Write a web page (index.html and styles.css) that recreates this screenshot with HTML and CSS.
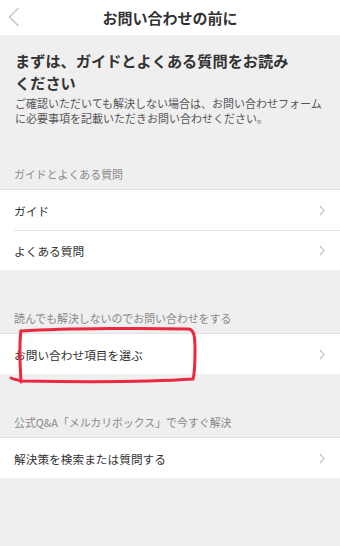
FILE: index.html
```html
<!DOCTYPE html>
<html lang="ja">
<head>
<meta charset="utf-8">
<link rel="stylesheet" href="styles.css">
</head>
<body>
<div class="page">
  <header class="header">
    <svg class="back" width="12" height="20" viewBox="0 0 12 20"><path d="M10.5 1 L1.5 10 L10.5 19" fill="none" stroke="#c9c9c9" stroke-width="1.6"/></svg>
    <h1 class="title">お問い合わせの前に</h1>
  </header>
  <section class="intro">
    <h2 class="intro-head">まずは、ガイドとよくある質問をお読みください</h2>
    <p class="intro-text">ご確認いただいても解決しない場合は、お問い合わせフォームに必要事項を記載いただきお問い合わせください。</p>
  </section>

  <div class="label">ガイドとよくある質問</div>
  <ul class="list">
    <li class="row"><span>ガイド</span><svg class="chev" width="6" height="11" viewBox="0 0 6 11"><path d="M1 1 L5 5.5 L1 10" fill="none" stroke="#c6c6c6" stroke-width="1.3"/></svg></li>
    <li class="row"><span>よくある質問</span><svg class="chev" width="6" height="11" viewBox="0 0 6 11"><path d="M1 1 L5 5.5 L1 10" fill="none" stroke="#c6c6c6" stroke-width="1.3"/></svg></li>
  </ul>

  <div class="label">読んでも解決しないのでお問い合わせをする</div>
  <ul class="list">
    <li class="row"><span>お問い合わせ項目を選ぶ</span><svg class="chev" width="6" height="11" viewBox="0 0 6 11"><path d="M1 1 L5 5.5 L1 10" fill="none" stroke="#c6c6c6" stroke-width="1.3"/></svg></li>
  </ul>

  <div class="label">公式Q&amp;A「メルカリボックス」で今すぐ解決</div>
  <ul class="list">
    <li class="row"><span>解決策を検索または質問する</span><svg class="chev" width="6" height="11" viewBox="0 0 6 11"><path d="M1 1 L5 5.5 L1 10" fill="none" stroke="#c6c6c6" stroke-width="1.3"/></svg></li>
  </ul>

  <svg class="mark" width="340" height="546" viewBox="0 0 340 546">
    <path d="M21 331 C70 328 150 328 189 329 C194 330 195 336 195 350 C195 362 195 372 193 379 C150 382 80 382 22 381 C17 380 13 379 11 378" fill="none" stroke="#ec2740" stroke-width="3" stroke-linecap="round"/>
    <path d="M21 331 C19 345 20 365 21 382" fill="none" stroke="#ec2740" stroke-width="3" stroke-linecap="round"/>
  </svg>
</div>
</body>
</html>
```
FILE: styles.css
```css
* { box-sizing: border-box; }
html, body { margin: 0; padding: 0; }
body {
  background: #efefef;
  font-family: "Noto Sans CJK JP", "Noto Sans", sans-serif;
  color: #333;
}
.page {
  position: relative;
  width: 340px;
  min-height: 546px;
  background: #efefef;
}
.header {
  position: relative;
  height: 35px;
  background: #fff;
  display: flex;
  align-items: center;
  justify-content: center;
}
.back {
  position: absolute;
  left: 8px;
  top: 7px;
}
.title {
  margin: 0;
  font-size: 15px;
  font-weight: 700;
  color: #333;
  line-height: 20px;
}
.intro {
  padding: 14px 14px 0 15px;
}
.intro-head {
  margin: 0;
  padding-right: 28px;
  font-size: 15.2px;
  font-weight: 700;
  line-height: 22px;
  color: #333;
}
.intro-text {
  margin: 3px 0 0;
  font-size: 11px;
  line-height: 15px;
  color: #555;
}
.label {
  padding: 41px 14px 7px;
  font-size: 10.9px;
  line-height: 15px;
  color: #888;
}
.list {
  list-style: none;
  margin: 0;
  padding: 0;
  background: #fff;
  border-top: 1px solid #e4e4e4;
}
.row {
  display: flex;
  align-items: center;
  justify-content: space-between;
  height: 40px;
  margin-left: 14px;
  padding-right: 15px;
  font-size: 11.7px;
  color: #333;
}
.row + .row {
  border-top: 1px solid #e4e4e4;
}
.chev { display: block; }
.mark {
  position: absolute;
  left: 0;
  top: 0;
  pointer-events: none;
}
```
